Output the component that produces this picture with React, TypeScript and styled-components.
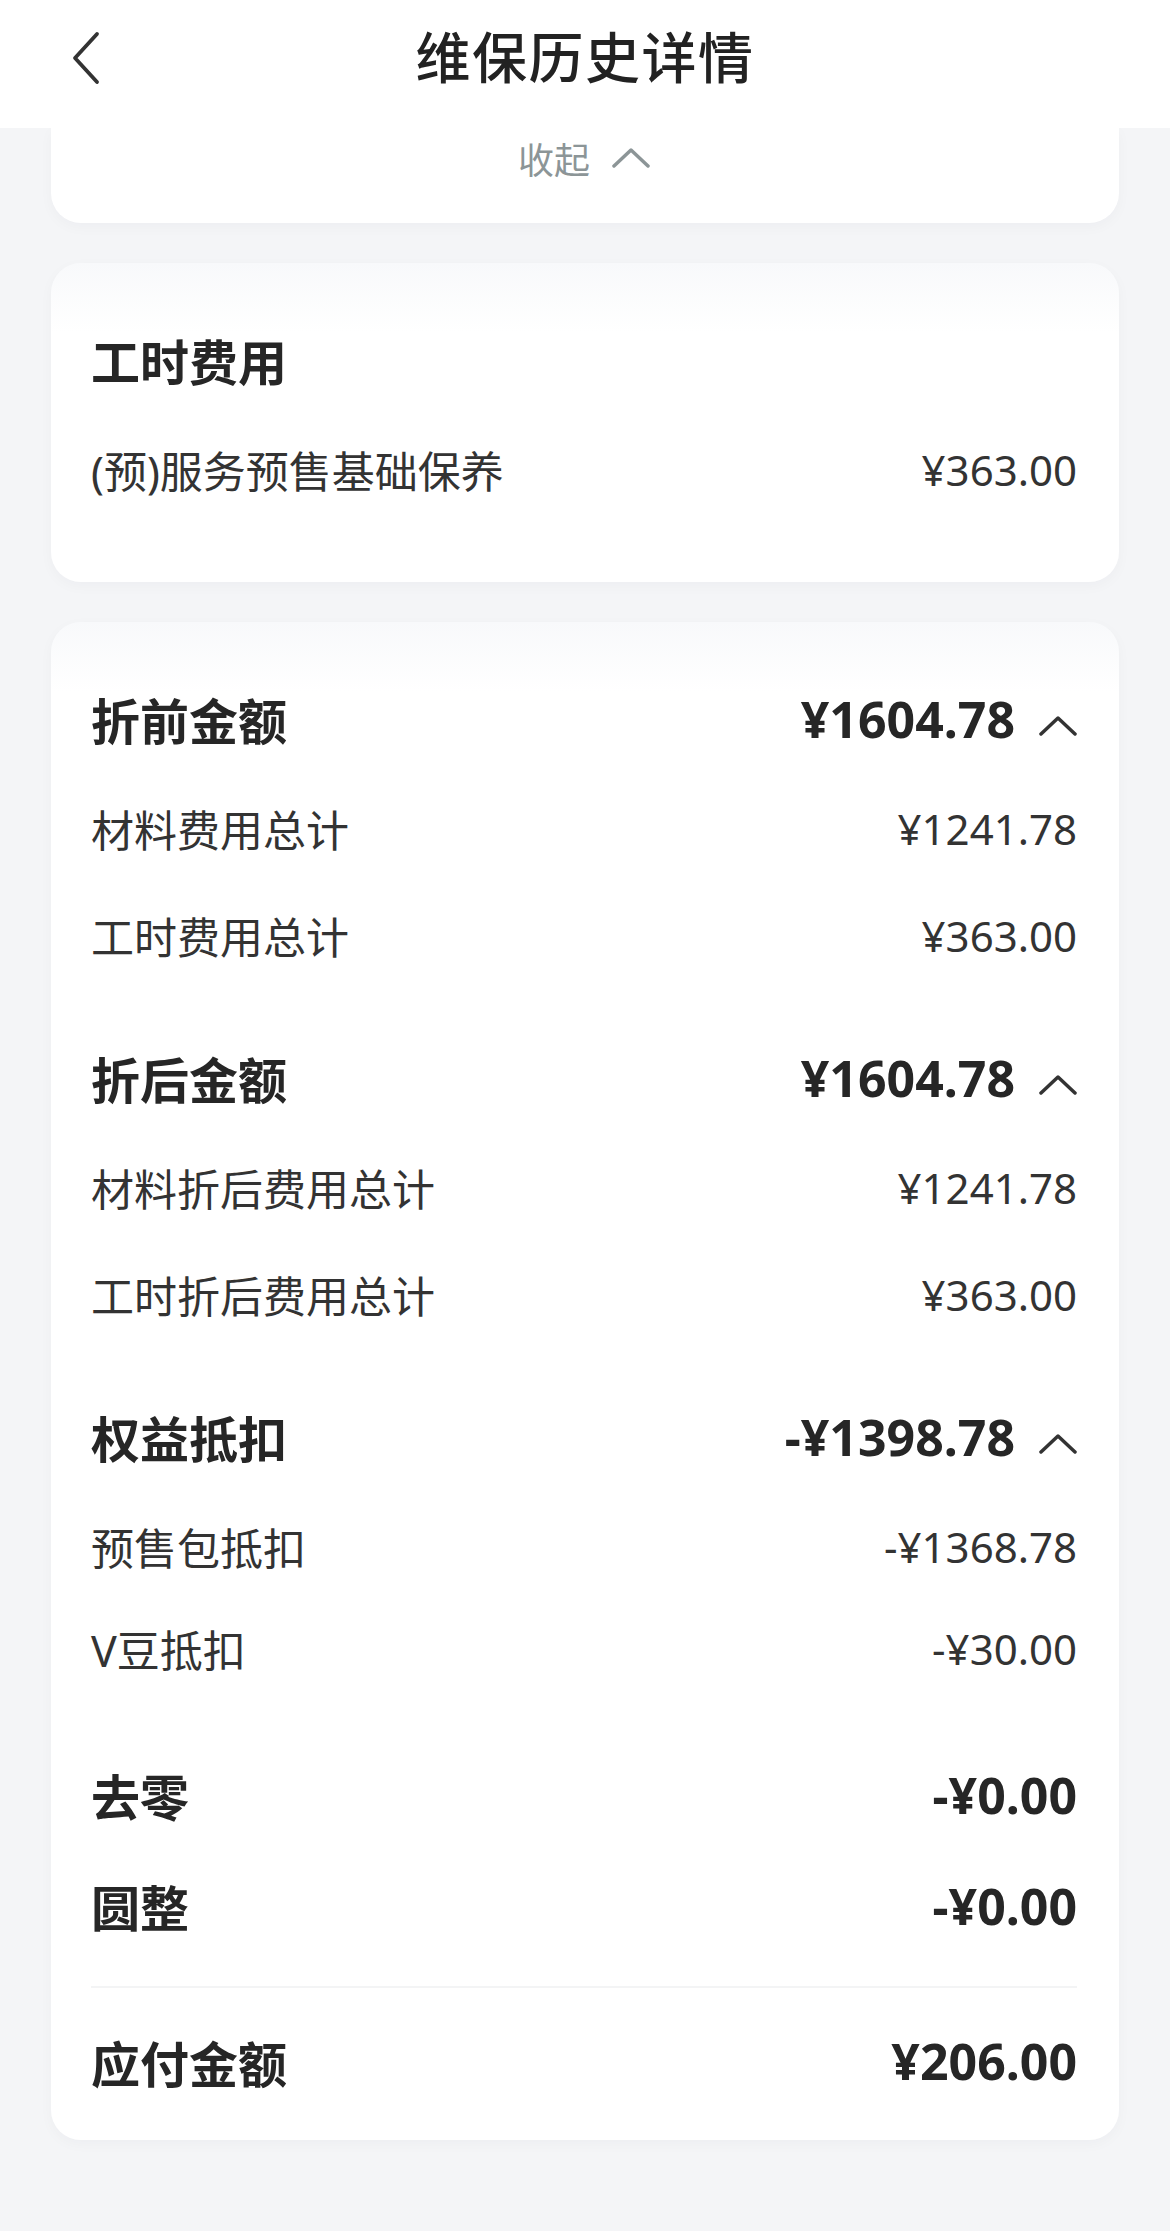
import React from "react";
import styled, { createGlobalStyle } from "styled-components";

const GlobalStyle = createGlobalStyle`
  html, body {
    margin: 0;
    padding: 0;
    background: #f4f5f7;
  }
  body {
    font-family: "Noto Sans", "Noto Sans CJK SC", sans-serif;
    color: #2e2e2e;
  }
`;

const StyledPage = styled.div`
  min-height: 2231px;
  background: #f4f5f7;
  display: flex;
  flex-direction: column;
`;

const StyledHeader = styled.header`
  height: 128px;
  background: #ffffff;
  display: flex;
  align-items: center;
  justify-content: center;
  padding-bottom: 20px;
  box-sizing: border-box;
  position: relative;
`;

const BackButton = styled.button`
  position: absolute;
  left: 68px;
  top: 30px;
  width: 36px;
  height: 56px;
  padding: 0;
  border: none;
  background: none;
  display: flex;
  align-items: center;
  justify-content: center;
`;

const StyledTitle = styled.h1`
  margin: 0;
  font-size: 55px;
  font-weight: 500;
  color: #222222;
  letter-spacing: 1.5px;
`;

const StyledMain = styled.main`
  padding: 0 51px;
  display: flex;
  flex-direction: column;
  gap: 40px;
`;

const Card = styled.section<{ $topCut?: boolean }>`
  background: linear-gradient(#f8f9fb 0px, #ffffff 70px);
  border-radius: ${(p) => (p.$topCut ? "0 0 30px 30px" : "30px")};
  box-shadow: 0 4px 14px rgba(30, 40, 60, 0.03);
  padding: 0 42px 0 40px;
  box-sizing: border-box;
`;

const CollapseCard = styled(Card)`
  height: 95px;
  background: #ffffff;
`;

const CollapseToggle = styled.div`
  height: 60px;
  display: flex;
  align-items: center;
  justify-content: center;
  gap: 22px;
  font-family: "Noto Sans CJK SC", sans-serif;
  font-size: 36px;
  color: #8c9597;
`;

const CardBody = styled.div<{ $top: number; $bottom: number }>`
  padding-top: ${(p) => p.$top}px;
  padding-bottom: ${(p) => p.$bottom}px;
  display: flex;
  flex-direction: column;
`;

const Group = styled.div<{ $gap: number }>`
  display: flex;
  flex-direction: column;
  margin-top: ${(p) => p.$gap}px;
`;

const Row = styled.div<{ $height: number }>`
  height: ${(p) => p.$height}px;
  flex-shrink: 0;
  display: flex;
  align-items: center;
  justify-content: space-between;
`;

const Label = styled.span<{ $strong?: boolean }>`
  font-size: ${(p) => (p.$strong ? 49 : 43)}px;
  font-weight: ${(p) => (p.$strong ? 700 : 400)};
  color: ${(p) => (p.$strong ? "#262626" : "#333333")};
  margin-bottom: ${(p) => (p.$strong ? 6 : 0)}px;
`;

const Amount = styled.span<{ $strong?: boolean }>`
  font-size: ${(p) => (p.$strong ? 50 : 42)}px;
  font-weight: ${(p) => (p.$strong ? 700 : 400)};
  color: ${(p) => (p.$strong ? "#262626" : "#333333")};
  margin-bottom: ${(p) => (p.$strong ? 6 : 0)}px;
  display: flex;
  align-items: center;
  gap: 24px;
`;

const ChevronIcon = styled.svg<{ $drop?: number }>`
  display: block;
  margin-top: ${(p) => p.$drop ?? 0}px;
`;

const Divider = styled.hr`
  margin: 22px 0 0;
  border: none;
  height: 2px;
  background: #f3f4f5;
`;

const ChevronUp: React.FC<{ color: string; drop?: number }> = ({
  color,
  drop,
}) => (
  <ChevronIcon width="38" height="22" viewBox="0 0 38 22" $drop={drop}>
    <polyline
      points="2,19 19,3 36,19"
      fill="none"
      stroke={color}
      strokeWidth="3.5"
      strokeLinecap="round"
      strokeLinejoin="round"
    />
  </ChevronIcon>
);

type Line = { label: string; value: string; height?: number };

type Section = {
  title: string;
  total: string;
  lines: Line[];
};

const sections: Section[] = [
  {
    title: "折前金额",
    total: "¥1604.78",
    lines: [
      { label: "材料费用总计", value: "¥1241.78" },
      { label: "工时费用总计", value: "¥363.00" },
    ],
  },
  {
    title: "折后金额",
    total: "¥1604.78",
    lines: [
      { label: "材料折后费用总计", value: "¥1241.78" },
      { label: "工时折后费用总计", value: "¥363.00" },
    ],
  },
  {
    title: "权益抵扣",
    total: "-¥1398.78",
    lines: [
      { label: "预售包抵扣", value: "-¥1368.78" },
      { label: "V豆抵扣", value: "-¥30.00", height: 97 },
    ],
  },
];

const App: React.FC = () => {
  return (
    <>
      <GlobalStyle />
      <StyledPage>
        <StyledHeader>
          <BackButton aria-label="返回">
            <svg width="30" height="54" viewBox="0 0 30 54">
              <polyline
                points="26,3 4,27 26,51"
                fill="none"
                stroke="#333333"
                strokeWidth="3.8"
                strokeLinecap="round"
                strokeLinejoin="round"
              />
            </svg>
          </BackButton>
          <StyledTitle>维保历史详情</StyledTitle>
        </StyledHeader>

        <StyledMain>
          <CollapseCard $topCut>
            <CollapseToggle>
              <span>收起</span>
              <ChevronUp color="#8c9597" />
            </CollapseToggle>
          </CollapseCard>

          <Card>
            <CardBody $top={46} $bottom={59}>
              <Row $height={107}>
                <Label $strong>工时费用</Label>
              </Row>
              <Row $height={107}>
                <Label>(预)服务预售基础保养</Label>
                <Amount>¥363.00</Amount>
              </Row>
            </CardBody>
          </Card>

          <Card>
            <CardBody $top={46} $bottom={0}>
              {sections.map((section, i) => (
                <Group key={section.title} $gap={i === 0 ? 0 : 38}>
                  <Row $height={107}>
                    <Label $strong>{section.title}</Label>
                    <Amount $strong>
                      {section.total}
                      <ChevronUp color="#333333" drop={14} />
                    </Amount>
                  </Row>
                  {section.lines.map((line) => (
                    <Row $height={line.height ?? 107} key={line.label}>
                      <Label>{line.label}</Label>
                      <Amount>{line.value}</Amount>
                    </Row>
                  ))}
                </Group>
              ))}
              <Group $gap={45}>
                <Row $height={111}>
                  <Label $strong>去零</Label>
                  <Amount $strong>-¥0.00</Amount>
                </Row>
                <Row $height={111}>
                  <Label $strong>圆整</Label>
                  <Amount $strong>-¥0.00</Amount>
                </Row>
              </Group>
              <Divider />
              <Row $height={152}>
                <Label $strong>应付金额</Label>
                <Amount $strong>¥206.00</Amount>
              </Row>
            </CardBody>
          </Card>
        </StyledMain>
      </StyledPage>
    </>
  );
};

export default App;
